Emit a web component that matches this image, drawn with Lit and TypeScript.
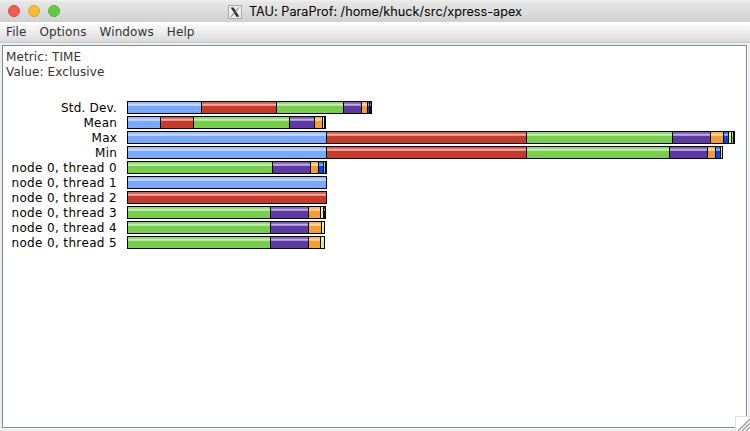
import { LitElement, html, css } from "lit";
import { customElement } from "lit/decorators.js";

type Segment = [start: number, color: string];
interface Row { label: string; end: number; segments: Segment[]; }

const BLUE = "#79a9ff", RED = "#c83a27", GREEN = "#75cf4a", PURPLE = "#5e38a5",
  ORANGE = "#f69d30", DEEP = "#0044ff", YELLOW = "#dcf73c", MINT = "#53d89b",
  CHARCOAL = "#111", BLACK = "#000";

const ROWS: Row[] = [
  { label: "Std. Dev.", end: 371, segments: [[127, BLUE], [201, RED], [276, GREEN], [343, PURPLE], [361, ORANGE], [367, DEEP], [369, CHARCOAL]] },
  { label: "Mean", end: 325, segments: [[127, BLUE], [160, RED], [193, GREEN], [289, PURPLE], [314, ORANGE], [322, YELLOW], [324, BLACK]] },
  { label: "Max", end: 734, segments: [[127, BLUE], [326, RED], [526, GREEN], [672, PURPLE], [710, ORANGE], [723, DEEP], [728, YELLOW], [731, MINT], [733, BLACK]] },
  { label: "Min", end: 722, segments: [[127, BLUE], [326, RED], [526, GREEN], [669, PURPLE], [707, ORANGE], [715, DEEP], [720, YELLOW]] },
  { label: "node 0, thread 0", end: 326, segments: [[127, GREEN], [272, PURPLE], [310, ORANGE], [318, DEEP], [323, MINT], [325, BLACK]] },
  { label: "node 0, thread 1", end: 326, segments: [[127, BLUE]] },
  { label: "node 0, thread 2", end: 326, segments: [[127, RED]] },
  { label: "node 0, thread 3", end: 325, segments: [[127, GREEN], [270, PURPLE], [308, ORANGE], [320, YELLOW], [323, CHARCOAL]] },
  { label: "node 0, thread 4", end: 324, segments: [[127, GREEN], [270, PURPLE], [308, ORANGE], [321, YELLOW]] },
  { label: "node 0, thread 5", end: 324, segments: [[127, GREEN], [270, PURPLE], [308, ORANGE], [320, YELLOW]] },
];

@customElement("app-root")
export class AppRoot extends LitElement {
  static styles = css`
    :host { display: flex; flex-direction: column; width: 750px; height: 431px; box-sizing: border-box; overflow: hidden; position: relative; background: #eee; color: #333; font: 12px/15px "DejaVu Sans", sans-serif; }
    .titlebar { flex: none; height: 22px; display: flex; align-items: center; background: linear-gradient(#f0f0f0, #e6e6e6 10%, #d0d0d0); }
    .lights { display: flex; gap: 8px; padding-left: 8px; width: 220px; box-sizing: border-box; }
    .light { width: 12px; height: 12px; box-sizing: border-box; border-radius: 50%; border: 1px solid; }
    .close { background: #f25b56; border-color: #df4744; }
    .minimize { background: #fabd2f; border-color: #de9f34; }
    .zoom { background: #60cb40; border-color: #4eb236; }
    .xicon { display: block; width: 14px; height: 14px; margin-left: 8px; margin-top: 2px; }
    .title { margin-left: 7px; margin-top: 1px; color: #000; font: 12.7px/16px Inter, sans-serif; font-feature-settings: "calt" 0; white-space: pre; }
    .menubar { flex: none; height: 21px; box-sizing: border-box; display: flex; padding: 3px 0 0 6px; background: linear-gradient(#fff, #dadada); border-bottom: 1px solid #c8c8c8; }
    .menu { margin-right: 13px; letter-spacing: .1px; }
    .frame { flex: 1; margin: 2px 3px 3px 2px; box-sizing: border-box; background: #fff; border: 1px solid #7a8a99; box-shadow: 1px 1px #fff; }
    .info { box-sizing: border-box; padding: 4px 0 0 3px; height: 54px; letter-spacing: .1px; }
    .chart { color: #000; }
    .row { display: flex; height: 15px; }
    .label { width: 114px; text-align: right; white-space: pre; line-height: 15px; padding-top: 1px; letter-spacing: .36px; }
    .short { letter-spacing: .2px; }
    .bar { display: flex; height: 13px; box-sizing: border-box; margin: 1px 0 0 10px; border: 1px solid #000; border-left: 0; }
    .segment { box-sizing: border-box; border-left: 1px solid #000; background-image: linear-gradient(#fff3 0 1px, #fff4 1px 2px, #fff9 2px 3px, #fff7 3px 4px, transparent 4px); }
    .dark { background-image: none; }
    .grip { position: absolute; right: 0; bottom: 0; width: 15px; height: 15px; }
  `;

  render() {
    return html`
      <div class="titlebar">
        <div class="lights"><i class="light close"></i><i class="light minimize"></i><i class="light zoom"></i></div>
        <svg class="xicon" viewBox="0 0 14 14">
          <rect x=".5" y=".5" width="13" height="13" fill="#eee" stroke="#aaa"/>
          <path d="M2.6 2.5h3L11.4 11.8h-3z" fill="#333"/>
          <path d="M10.8 2.5 3 11.8" stroke="#666"/>
        </svg>
        <span class="title">TAU: ParaProf: /home/khuck/src/xpress-apex</span>
      </div>
      <nav class="menubar"><span class="menu">File</span><span class="menu">Options</span><span class="menu">Windows</span><span class="menu">Help</span></nav>
      <main class="frame">
        <div class="info"><div>Metric: TIME</div><div>Value: Exclusive</div></div>
        <div class="chart">${ROWS.map((row) => html`
          <div class="row"><span class="label ${row.label.startsWith("node") ? "" : "short"}">${row.label}</span><div class="bar">${row.segments.map(([start, color], i) => {
            const next = row.segments[i + 1]?.[0] ?? row.end;
            return html`<i class="segment ${color === BLACK ? "dark" : ""}" style="width:${next - start}px;background-color:${color}"></i>`;
          })}</div></div>`)}</div>
      </main>
      <svg class="grip" viewBox="0 0 15 15">
        <rect width="15" height="15" fill="#fff"/>
        <path d="M0 .5h15M.5 0v15" stroke="#ddd"/>
        <path d="M3 15 15 3M7 15l8-8M11 15l4-4" stroke="#999" stroke-width="1.3"/>
      </svg>`;
  }
}
